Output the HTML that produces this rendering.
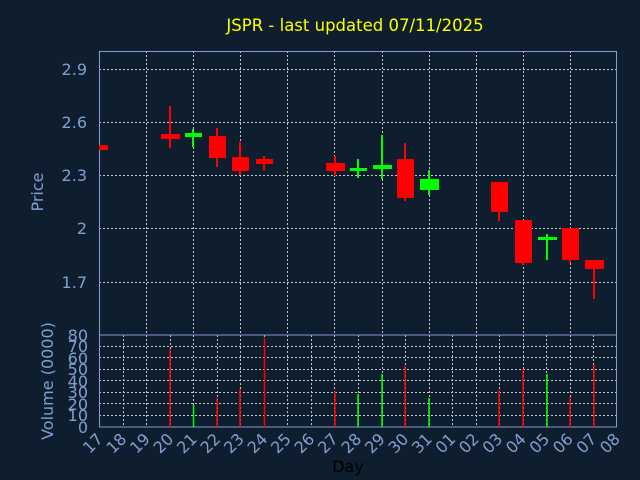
<!DOCTYPE html><html><head><style>body{margin:0;background:#0f1e2e}svg{display:block}text{font-family:"DejaVu Sans","Liberation Sans",sans-serif}</style></head><body>
<svg width="640" height="480" xmlns="http://www.w3.org/2000/svg">
<rect width="640" height="480" fill="#0f1e2e"/>
<text x="355" y="31" fill="#ffff00" font-size="16.5" text-anchor="middle">JSPR - last updated 07/11/2025</text>
<g stroke="#c8c8c8" stroke-dasharray="2,2" stroke-width="1">
<path d="M99 69.5H617M99 122.5H617M99 175.5H617M99 228.5H617M99 282.5H617"/>
<path d="M146.5 51V335M193.5 51V335M240.5 51V335M287.5 51V335M334.5 51V335M382.5 51V335M429.5 51V335M476.5 51V335M523.5 51V335M570.5 51V335"/>
<path d="M99 346.5H617M99 357.5H617M99 369.5H617M99 380.5H617M99 392.5H617M99 403.5H617M99 415.5H617"/>
<path d="M123.5 335V427M146.5 335V427M170.5 335V427M193.5 335V427M217.5 335V427M240.5 335V427M264.5 335V427M287.5 335V427M311.5 335V427M334.5 335V427M358.5 335V427M382.5 335V427M405.5 335V427M429.5 335V427M452.5 335V427M476.5 335V427M499.5 335V427M523.5 335V427M546.5 335V427M570.5 335V427M593.5 335V427"/>
</g>
<g stroke="#7fa0d0" fill="none">
<rect x="99.5" y="51.5" width="517" height="283.5"/>
<rect x="99.5" y="335" width="517" height="92"/>
</g>
<g fill="#ff0000">
<rect x="99" y="145" width="9" height="5"/>
<rect x="169" y="106" width="2" height="42"/><rect x="161" y="134" width="19" height="5"/>
<rect x="216" y="128" width="2" height="39"/><rect x="209" y="136" width="17" height="22"/>
<rect x="239" y="142" width="2" height="33"/><rect x="232" y="157" width="17" height="14"/>
<rect x="263" y="156" width="2" height="15"/><rect x="256" y="159" width="17" height="5"/>
<rect x="334" y="156" width="2" height="20"/><rect x="326" y="163" width="19" height="8"/>
<rect x="404" y="143" width="2" height="58"/><rect x="397" y="159" width="17" height="39"/>
<rect x="498" y="182" width="2" height="39"/><rect x="491" y="182" width="17" height="30"/>
<rect x="522" y="220" width="2" height="45"/><rect x="515" y="220" width="17" height="43"/>
<rect x="569" y="228" width="2" height="35"/><rect x="562" y="228" width="17" height="32"/>
<rect x="593" y="260" width="2" height="39"/><rect x="585" y="260" width="19" height="9"/>
</g>
<g fill="#00ff00">
<rect x="192" y="129" width="2" height="18"/><rect x="185" y="133" width="17" height="4"/>
<rect x="357" y="159" width="2" height="19"/><rect x="350" y="168" width="17" height="3"/>
<rect x="381" y="135" width="2" height="44"/><rect x="373" y="165" width="19" height="4"/>
<rect x="428" y="170" width="2" height="25"/><rect x="420" y="179" width="19" height="11"/>
<rect x="546" y="234" width="2" height="26"/><rect x="538" y="237" width="19" height="3"/>
</g>
<g stroke-width="1.5">
<path stroke="#ff0000" d="M170 349V427M217 398V427M240 389V427M264.5 338V427M335 391V427M405 366V427M499 390V427M523 369V427M570 397V427M594 365V427"/>
<path stroke="#00ff00" d="M193.5 405V427M358 394V427M382 374V427M429 398V427M547 374V427"/>
</g>
<g fill="#7fa0d0" font-size="16" text-anchor="end">
<text x="87" y="75">2.9</text><text x="87" y="128">2.6</text><text x="87" y="181">2.3</text><text x="87" y="234">2</text><text x="87" y="288">1.7</text>
<text x="88" y="341">80</text><text x="88" y="352">70</text><text x="88" y="364">60</text><text x="88" y="375">50</text><text x="88" y="387">40</text><text x="88" y="398">30</text><text x="88" y="410">20</text><text x="88" y="421">10</text><text x="88" y="433">0</text>
</g>
<text transform="translate(43,192) rotate(-90)" fill="#7fa0d0" font-size="16" text-anchor="middle">Price</text>
<text transform="translate(53,381) rotate(-90)" fill="#7fa0d0" font-size="16" text-anchor="middle">Volume (0000)</text>
<g fill="#7fa0d0" font-size="16" text-anchor="end">
<text transform="translate(104,440) rotate(-45)">17</text><text transform="translate(127.5,440) rotate(-45)">18</text><text transform="translate(151,440) rotate(-45)">19</text><text transform="translate(174.5,440) rotate(-45)">20</text><text transform="translate(198,440) rotate(-45)">21</text><text transform="translate(221.5,440) rotate(-45)">22</text><text transform="translate(245,440) rotate(-45)">23</text><text transform="translate(268.5,440) rotate(-45)">24</text><text transform="translate(292,440) rotate(-45)">25</text><text transform="translate(315.5,440) rotate(-45)">26</text><text transform="translate(339,440) rotate(-45)">27</text><text transform="translate(362.5,440) rotate(-45)">28</text><text transform="translate(386,440) rotate(-45)">29</text><text transform="translate(409.5,440) rotate(-45)">30</text><text transform="translate(433,440) rotate(-45)">31</text><text transform="translate(456.5,440) rotate(-45)">01</text><text transform="translate(480,440) rotate(-45)">02</text><text transform="translate(503.5,440) rotate(-45)">03</text><text transform="translate(527,440) rotate(-45)">04</text><text transform="translate(550.5,440) rotate(-45)">05</text><text transform="translate(574,440) rotate(-45)">06</text><text transform="translate(597.5,440) rotate(-45)">07</text><text transform="translate(621,440) rotate(-45)">08</text>
</g>
<text x="348" y="472" fill="#000" font-size="16" text-anchor="middle">Day</text>
</svg></body></html>
